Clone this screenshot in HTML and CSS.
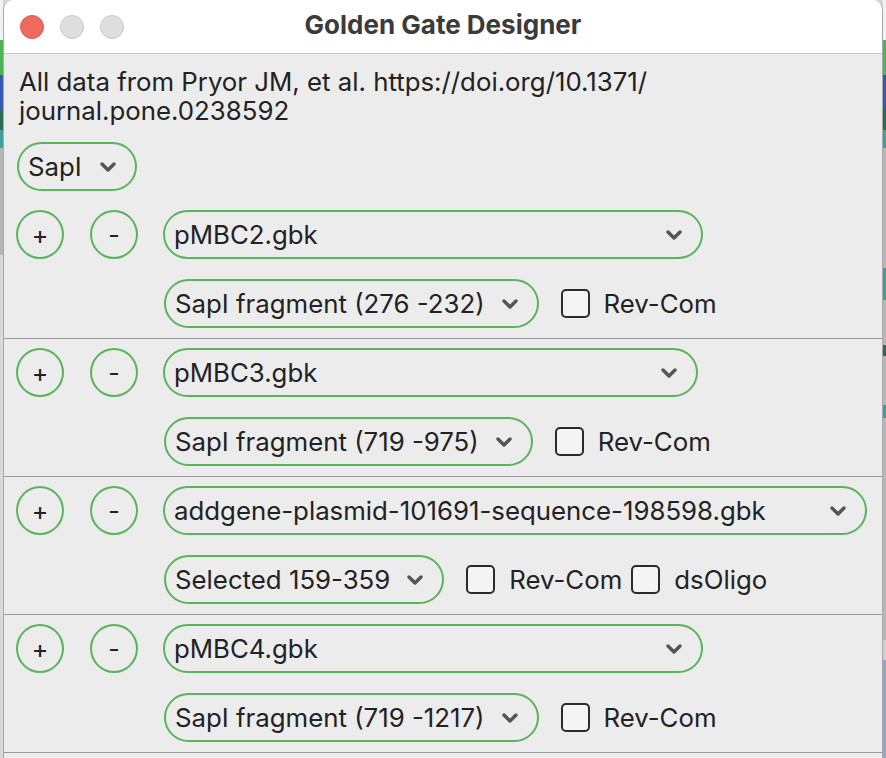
FILE: index.html
```html
<!DOCTYPE html>
<html lang="en">
<head>
<meta charset="utf-8">
<title>Golden Gate Designer</title>
<link rel="stylesheet" href="styles.css">
</head>
<body>
<div class="screen">
  <div class="side side-left"></div>
  <div class="window">
    <div class="titlebar">
      <div class="lights">
        <span class="light red"></span>
        <span class="light"></span>
        <span class="light"></span>
      </div>
      <div class="title">Golden Gate Designer</div>
    </div>
    <div class="content">
      <p class="note">All data from Pryor JM, et al. https://doi.org/10.1371/<br>journal.pone.0238592</p>
      <div class="select enzyme"><span class="sel-text">SapI</span><svg class="chev" viewBox="0 0 16 10"><polyline points="2,2 8,8 14,2"/></svg></div>

      <div class="group">
        <div class="row">
          <button class="round">+</button>
          <button class="round">-</button>
          <div class="select file w540"><span class="sel-text">pMBC2.gbk</span><svg class="chev" viewBox="0 0 16 10"><polyline points="2,2 8,8 14,2"/></svg></div>
        </div>
        <div class="row sub">
          <div class="select frag"><span class="sel-text">SapI fragment (276 -232)</span><svg class="chev" viewBox="0 0 16 10"><polyline points="2,2 8,8 14,2"/></svg></div>
          <label class="check"><span class="box"></span>Rev-Com</label>
        </div>
      </div>

      <div class="group">
        <div class="row">
          <button class="round">+</button>
          <button class="round">-</button>
          <div class="select file w535"><span class="sel-text">pMBC3.gbk</span><svg class="chev" viewBox="0 0 16 10"><polyline points="2,2 8,8 14,2"/></svg></div>
        </div>
        <div class="row sub">
          <div class="select frag"><span class="sel-text">SapI fragment (719 -975)</span><svg class="chev" viewBox="0 0 16 10"><polyline points="2,2 8,8 14,2"/></svg></div>
          <label class="check"><span class="box"></span>Rev-Com</label>
        </div>
      </div>

      <div class="group">
        <div class="row">
          <button class="round">+</button>
          <button class="round">-</button>
          <div class="select file w704"><span class="sel-text">addgene-plasmid-101691-sequence-198598.gbk</span><svg class="chev" viewBox="0 0 16 10"><polyline points="2,2 8,8 14,2"/></svg></div>
        </div>
        <div class="row sub">
          <div class="select frag"><span class="sel-text">Selected 159-359</span><svg class="chev" viewBox="0 0 16 10"><polyline points="2,2 8,8 14,2"/></svg></div>
          <label class="check"><span class="box"></span>Rev-Com</label>
          <label class="check tight"><span class="box"></span>dsOligo</label>
        </div>
      </div>

      <div class="group">
        <div class="row">
          <button class="round">+</button>
          <button class="round">-</button>
          <div class="select file w540"><span class="sel-text">pMBC4.gbk</span><svg class="chev" viewBox="0 0 16 10"><polyline points="2,2 8,8 14,2"/></svg></div>
        </div>
        <div class="row sub">
          <div class="select frag"><span class="sel-text">SapI fragment (719 -1217)</span><svg class="chev" viewBox="0 0 16 10"><polyline points="2,2 8,8 14,2"/></svg></div>
          <label class="check"><span class="box"></span>Rev-Com</label>
        </div>
      </div>
    </div>
  </div>
  <div class="side side-right"></div>
</div>
</body>
</html>
```

FILE: styles.css
```css
* { box-sizing: border-box; }

html, body {
  margin: 0;
  padding: 0;
  width: 886px;
  height: 758px;
  overflow: hidden;
}

body {
  font-family: "Inter", "Liberation Sans", sans-serif;
  color: #222;
  background: #d6d6d6;
}

.screen {
  display: flex;
  width: 886px;
  height: 758px;
}

.side {
  width: 3px;
  flex: none;
}

.side-left {
  background: linear-gradient(to bottom,
    #f2f2f2 0 40px, #4fb455 40px 75px, #3857b1 75px 110px,
    #2c6b55 110px 130px, #3f9f99 130px 148px, #b6b6b6 148px 255px,
    #d9d9d9 255px 758px);
}

.side-right {
  background: linear-gradient(to bottom,
    #f2f2f2 0 40px, #4fb455 40px 75px, #3857b1 75px 110px,
    #2c6b55 110px 130px, #3f9f99 130px 148px, #b6b6b6 148px 268px,
    #3f9f99 268px 300px, #b6b6b6 300px 345px, #2c6b55 345px 356px,
    #b6b6b6 356px 405px, #3f9f99 405px 418px, #b6b6b6 418px 640px,
    #cfcfcf 640px 660px, #8fa8d0 660px 758px);
}

.window {
  width: 880px;
  flex: none;
  height: 758px;
  background: #ececec;
  border-left: 1px solid #a9a9a9;
  border-right: 1px solid #a9a9a9;
  border-radius: 10px 10px 0 0;
  overflow: hidden;
}

.titlebar {
  height: 54px;
  background: #ffffff;
  border-bottom: 1px solid #c9c9c9;
  display: flex;
  align-items: center;
  position: relative;
}

.lights {
  display: flex;
  gap: 16px;
  padding-left: 16px;
}

.light {
  width: 24px;
  height: 24px;
  border-radius: 50%;
  background: #dedede;
  border: 1px solid #c8c8c8;
}

.light.red {
  background: #ee6a5e;
  border-color: #d85a50;
}

.title {
  position: absolute;
  left: 0;
  right: 0;
  top: 0;
  bottom: 0;
  display: flex;
  align-items: center;
  justify-content: center;
  font-weight: 700;
  font-size: 26px;
  color: #3b3b3b;
  padding-bottom: 4px;
}

.content {
  padding: 13px 0 0 12px;
}

.note {
  margin: 0 0 17px 3px;
  font-size: 25.8px;
  line-height: 29px;
  color: #222;
}

.select {
  display: flex;
  align-items: center;
  height: 49px;
  border: 2px solid #58b55c;
  border-radius: 25px;
  padding: 0 19px 0 9px;
  font-size: 25.8px;
  color: #222;
  flex: none;
}

.sel-text {
  flex: 1;
  white-space: nowrap;
}

.chev {
  width: 16px;
  height: 10px;
  margin-left: 17px;
  flex: none;
}

.chev polyline {
  fill: none;
  stroke: #555;
  stroke-width: 3.4;
  stroke-linecap: round;
  stroke-linejoin: round;
}

.enzyme {
  width: 120px;
  margin-left: 1px;
  margin-bottom: 10px;
}

.w540 { width: 540px; }
.w535 { width: 535px; }
.w704 { width: 704px; }

.group {
  padding: 9px 0 10px 12px;
  border-bottom: 1px solid #9a9a9a;
  margin-left: -12px;
  display: flex;
  flex-direction: column;
  gap: 20px;
}

.row {
  display: flex;
  align-items: center;
  gap: 26px;
}

.row.sub {
  padding-left: 148px;
  gap: 22px;
}

.round {
  width: 48px;
  height: 49px;
  border-radius: 50%;
  border: 2px solid #58b55c;
  background: transparent;
  font-family: inherit;
  font-size: 25px;
  color: #222;
  padding: 0;
  display: flex;
  align-items: center;
  justify-content: center;
}

.round + .round {
  margin-right: -1px;
}

.check {
  display: flex;
  align-items: center;
  gap: 14px;
  font-size: 25.8px;
  color: #222;
}

.check.tight {
  margin-left: -13px;
}

.box {
  width: 29px;
  height: 29px;
  border: 2px solid #2b2b2b;
  border-radius: 5px;
  background: #f4f4f4;
}
```
